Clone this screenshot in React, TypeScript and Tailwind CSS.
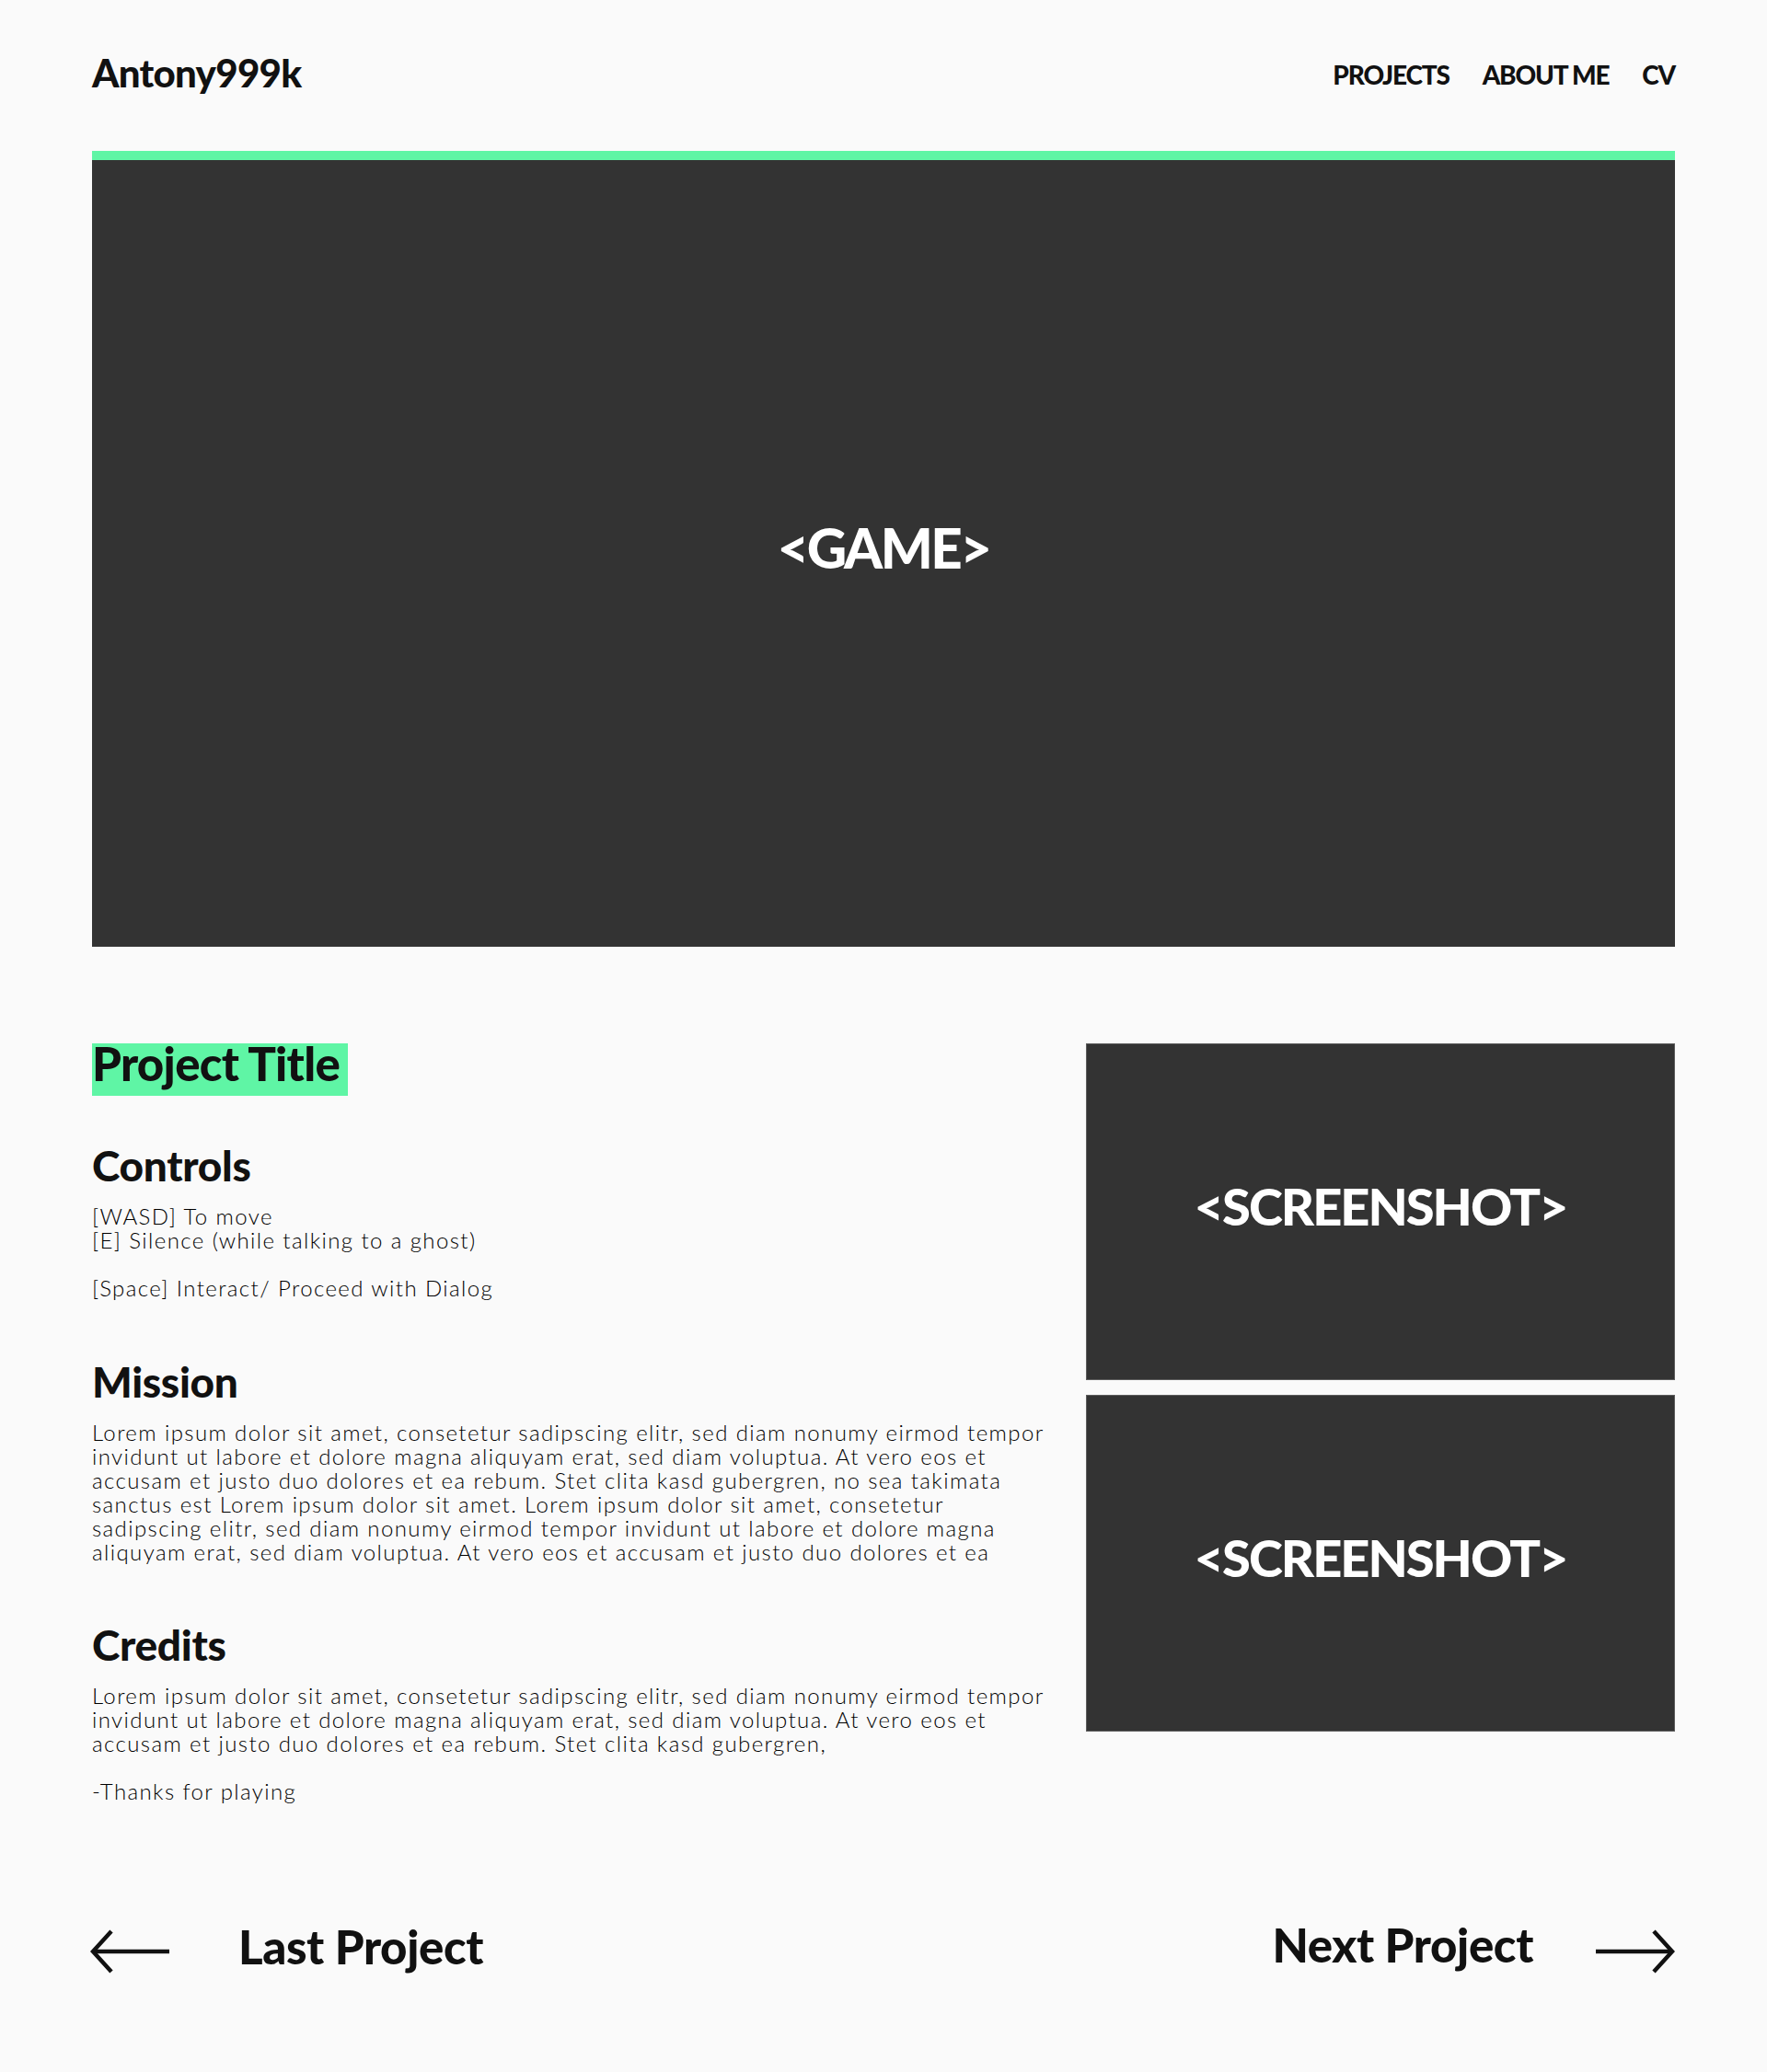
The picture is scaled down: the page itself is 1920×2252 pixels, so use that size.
import React from "react";

const heading = "font-['Lato',sans-serif] font-black text-[#111111]";
const body = "font-['Lato',sans-serif] font-light text-[24px] leading-[26px] tracking-[1.4px] text-black whitespace-nowrap";

const missionLines = [
  "Lorem ipsum dolor sit amet, consetetur sadipscing elitr, sed diam nonumy eirmod tempor",
  "invidunt ut labore et dolore magna aliquyam erat, sed diam voluptua. At vero eos et",
  "accusam et justo duo dolores et ea rebum. Stet clita kasd gubergren, no sea takimata",
  "sanctus est Lorem ipsum dolor sit amet. Lorem ipsum dolor sit amet, consetetur",
  "sadipscing elitr, sed diam nonumy eirmod tempor invidunt ut labore et dolore magna",
  "aliquyam erat, sed diam voluptua. At vero eos et accusam et justo duo dolores et ea",
];

const creditLines = [
  "Lorem ipsum dolor sit amet, consetetur sadipscing elitr, sed diam nonumy eirmod tempor",
  "invidunt ut labore et dolore magna aliquyam erat, sed diam voluptua. At vero eos et",
  "accusam et justo duo dolores et ea rebum. Stet clita kasd gubergren,",
  "\u00a0",
  "-Thanks for playing",
];

function Lines({ lines }: { lines: string[] }) {
  return (
    <div className={body}>
      {lines.map((l, i) => (
        <span key={i} className="block">
          {l}
        </span>
      ))}
    </div>
  );
}

function ArrowLeft() {
  return (
    <svg width="86" height="48" viewBox="0 0 86 48" fill="none" stroke="#111111" strokeWidth="4.5">
      <path d="M86 24 H3" />
      <path d="M23 2 L3 24 L23 46" strokeLinejoin="miter" />
    </svg>
  );
}

function ArrowRight() {
  return (
    <svg width="86" height="48" viewBox="0 0 86 48" fill="none" stroke="#111111" strokeWidth="4.5">
      <path d="M0 24 H83" />
      <path d="M63 2 L83 24 L63 46" strokeLinejoin="miter" />
    </svg>
  );
}

function Shot() {
  return (
    <div className="h-[366px] bg-[#333333] border border-[#5c5c5c] flex items-center justify-center pb-[13px]">
      <span className="font-['Lato',sans-serif] font-black text-white text-[56px] leading-none tracking-[-2px]">
        &lt;SCREENSHOT&gt;
      </span>
    </div>
  );
}

export default function App() {
  return (
    <div className="min-h-[2252px] bg-[#fafafa] px-[100px]">
      <header className="flex items-start justify-between pt-[58px] h-[164px]">
        <div className={`${heading} text-[42px] leading-none tracking-[-0.7px]`}>Antony999k</div>
        <nav className={`${heading} mt-[9px] flex gap-[36px] text-[28px] leading-none tracking-[-1.2px]`}>
          <span>PROJECTS</span>
          <span>ABOUT ME</span>
          <span>CV</span>
        </nav>
      </header>

      <div className="border-t-[10px] border-[#5ff5a5] h-[865px] bg-[#333333] flex items-center justify-center pb-[14px]">
        <span className="font-['Lato',sans-serif] font-black text-white text-[60px] leading-none tracking-[-2.5px]">
          &lt;GAME&gt;
        </span>
      </div>

      <section className="mt-[105px] grid grid-cols-[1fr_640px] gap-[40px]">
        <div>
          <h1 className={`${heading} inline-block bg-[#5ff5a5] text-[51px] leading-[44px] pb-[13px] pr-[9px] tracking-[-0.7px]`}>
            Project Title
          </h1>

          <h2 className={`${heading} mt-[53px] text-[46px] leading-none tracking-[-0.3px]`}>Controls</h2>
          <div className="mt-[19px]">
            <Lines lines={["[WASD] To move", "[E] Silence (while talking to a ghost)", "\u00a0", "[Space] Interact/ Proceed with Dialog"]} />
          </div>

          <h2 className={`${heading} mt-[66px] text-[46px] leading-none tracking-[-0.3px]`}>Mission</h2>
          <div className="mt-[19px]">
            <Lines lines={missionLines} />
          </div>

          <h2 className={`${heading} mt-[65px] text-[46px] leading-none tracking-[-0.3px]`}>Credits</h2>
          <div className="mt-[19px]">
            <Lines lines={creditLines} />
          </div>
        </div>

        <div className="flex flex-col gap-[16px]">
          <Shot />
          <Shot />
        </div>
      </section>

      <footer className="mt-[130px] flex items-start justify-between">
        <div className="flex items-start">
          <div className="mt-[7px] -ml-[2px]">
            <ArrowLeft />
          </div>
          <span className={`${heading} ml-[75px] text-[51px] leading-none tracking-[-0.4px]`}>Last Project</span>
        </div>
        <div className="flex items-start -mt-[2px]">
          <span className={`${heading} text-[51px] leading-none tracking-[-0.4px]`}>Next Project</span>
          <div className="ml-[68px] mt-[9px]">
            <ArrowRight />
          </div>
        </div>
      </footer>
    </div>
  );
}
